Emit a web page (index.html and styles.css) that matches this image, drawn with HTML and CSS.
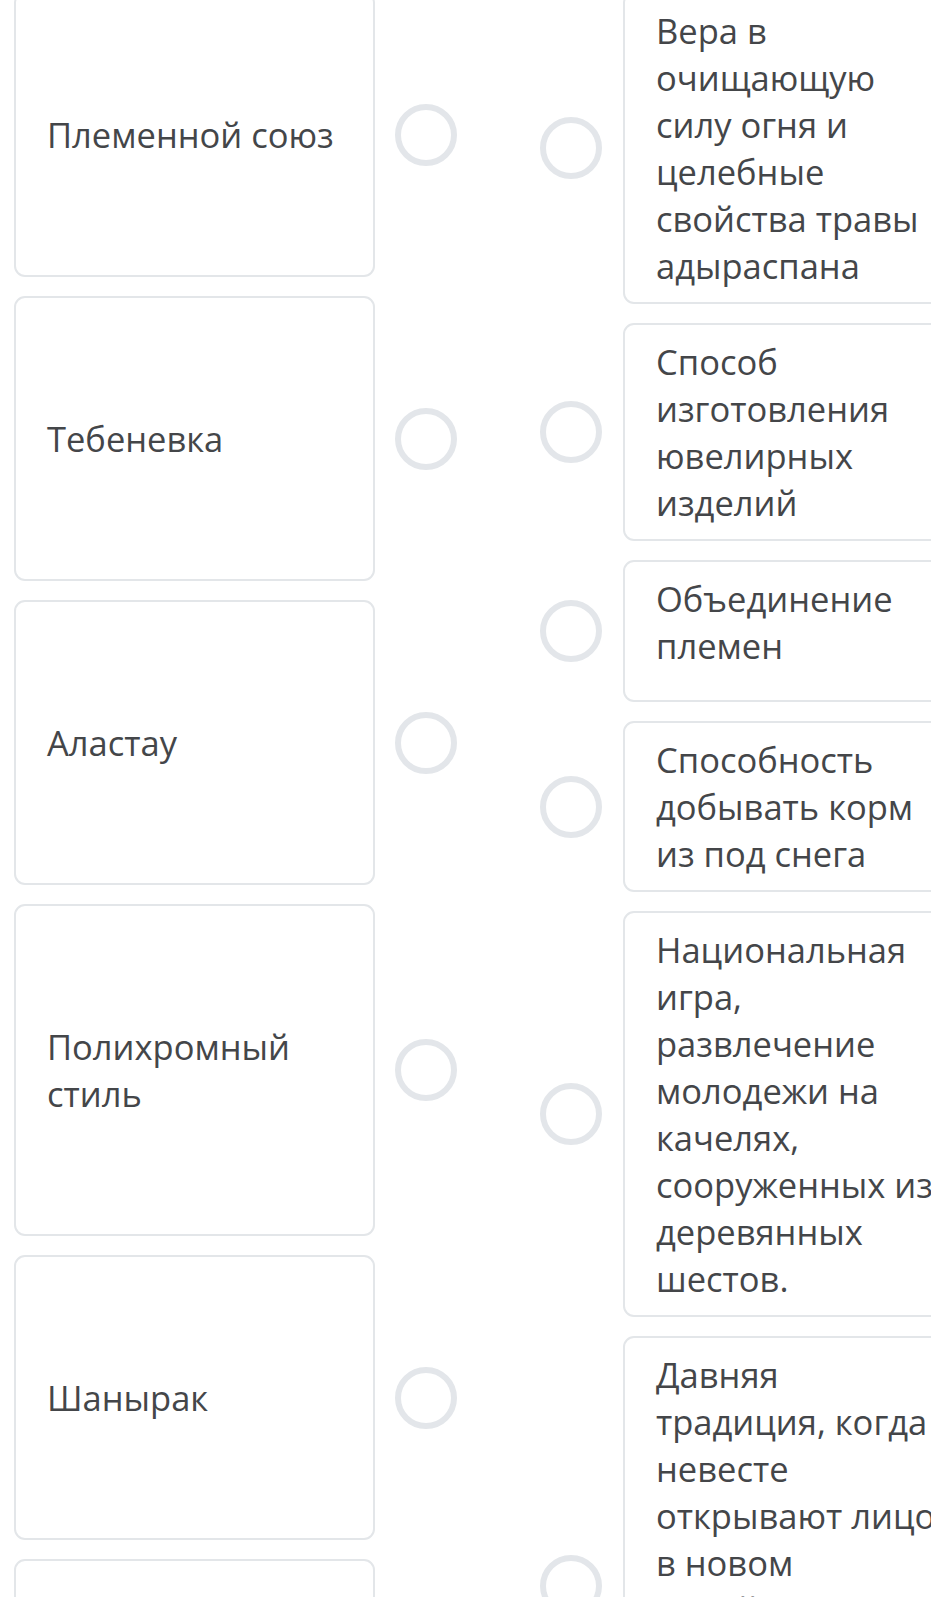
FILE: index.html
```html
<!DOCTYPE html>
<html lang="ru">
<head>
<meta charset="utf-8">
<title>Сопоставление</title>
<link rel="stylesheet" href="styles.css">
</head>
<body>
<div class="board">
  <div class="col">
    <div class="row-left"><div class="card left">Племенной союз</div><span class="dot"></span></div>
    <div class="row-left"><div class="card left">Тебеневка</div><span class="dot"></span></div>
    <div class="row-left"><div class="card left">Аластау</div><span class="dot"></span></div>
    <div class="row-left"><div class="card left">Полихромный стиль</div><span class="dot"></span></div>
    <div class="row-left"><div class="card left">Шанырак</div><span class="dot"></span></div>
    <div class="row-left"><div class="card left">Беташар</div><span class="dot"></span></div>
  </div>
  <div class="col">
    <div class="row-right"><span class="dot"></span><div class="card right">Вера в очищающую силу огня и целебные свойства травы адыраспана</div></div>
    <div class="row-right"><span class="dot"></span><div class="card right">Способ изготовления ювелирных изделий</div></div>
    <div class="row-right"><span class="dot"></span><div class="card right">Объединение племен</div></div>
    <div class="row-right"><span class="dot"></span><div class="card right">Способность добывать корм из под снега</div></div>
    <div class="row-right"><span class="dot"></span><div class="card right">Национальная игра, развлечение молодежи на качелях, сооруженных из деревянных шестов.</div></div>
    <div class="row-right"><span class="dot"></span><div class="card right">Давняя традиция, когда невесте открывают лицо в новом семейном кругу и представляют её всем родным и близким жениха.</div></div>
  </div>
</div>
</body>
</html>
```

FILE: styles.css
```css
html, body {
  margin: 0;
  padding: 0;
  overflow: hidden;
  background: #ffffff;
}

body {
  font-family: "Open Sans", "Noto Sans", sans-serif;
  color: #444649;
  font-size: 34.5px;
  line-height: 47px;
}

.board {
  display: flex;
  align-items: flex-start;
  gap: 83px;
  margin: -8px 0 0 14px;
  width: 1000px;
}

.col {
  display: flex;
  flex-direction: column;
  gap: 19px;
  flex: none;
}

.row-left,
.row-right {
  display: flex;
  align-items: center;
  gap: 20px;
}

.row-right {
  gap: 21px;
}

.card {
  box-sizing: border-box;
  width: 361px;
  border: 2px solid #e3e6e9;
  border-radius: 11px;
  background: #ffffff;
  flex: none;
}

.card.left {
  padding: 117px 31px;
}

.card.right {
  padding: 13px 31px;
  min-height: 142px;
}

.dot {
  box-sizing: border-box;
  width: 62px;
  height: 62px;
  border: 6px solid #e3e6ea;
  border-radius: 50%;
  flex: none;
}
```
